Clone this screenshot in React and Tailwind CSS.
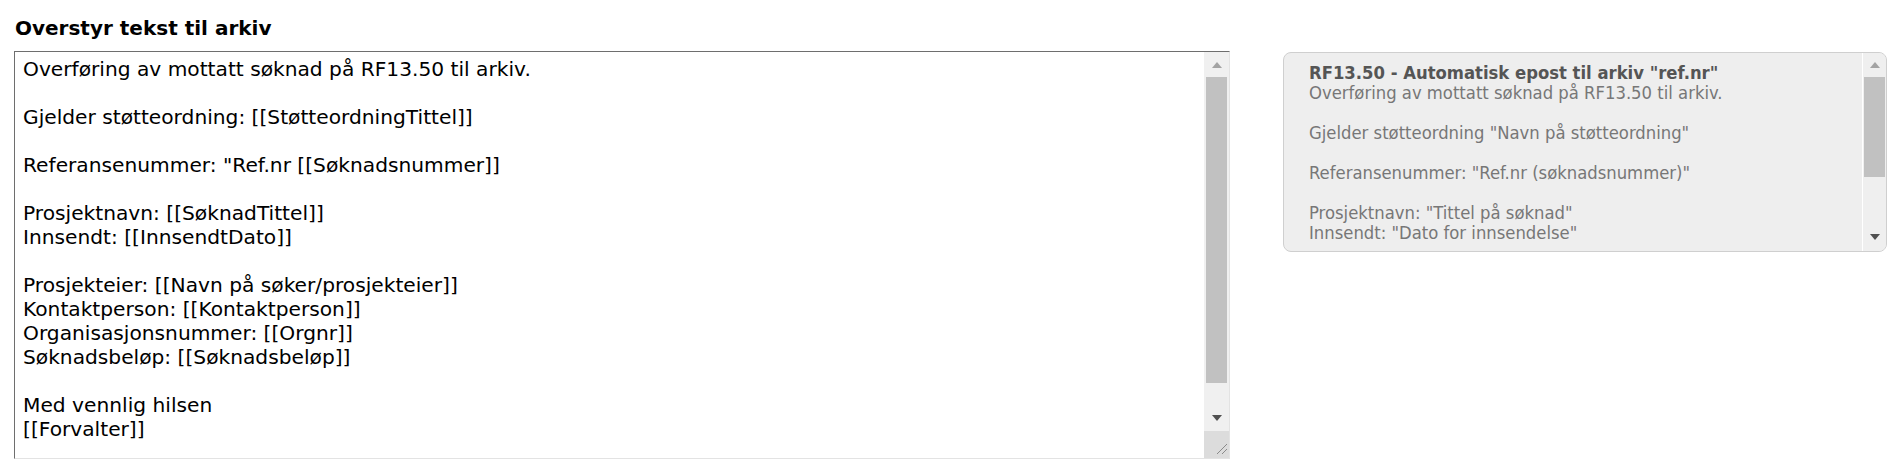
import React from 'react';

const bodyLines = [
  'Overføring av mottatt søknad på RF13.50 til arkiv.',
  '',
  'Gjelder støtteordning: [[StøtteordningTittel]]',
  '',
  'Referansenummer: "Ref.nr [[Søknadsnummer]]',
  '',
  'Prosjektnavn: [[SøknadTittel]]',
  'Innsendt: [[InnsendtDato]]',
  '',
  'Prosjekteier: [[Navn på søker/prosjekteier]]',
  'Kontaktperson: [[Kontaktperson]]',
  'Organisasjonsnummer: [[Orgnr]]',
  'Søknadsbeløp: [[Søknadsbeløp]]',
  '',
  'Med vennlig hilsen',
  '[[Forvalter]]',
];

const previewLines = [
  'Overføring av mottatt søknad på RF13.50 til arkiv.',
  '',
  'Gjelder støtteordning "Navn på støtteordning"',
  '',
  'Referansenummer: "Ref.nr (søknadsnummer)"',
  '',
  'Prosjektnavn: "Tittel på søknad"',
  'Innsendt: "Dato for innsendelse"',
];

const ArrowUp = ({ color }) => (
  <svg width="10" height="6" viewBox="0 0 10 6">
    <polygon points="0,6 10,6 5,0" fill={color} />
  </svg>
);

const ArrowDown = ({ color }) => (
  <svg width="10" height="6" viewBox="0 0 10 6">
    <polygon points="0,0 10,0 5,6" fill={color} />
  </svg>
);

const Grip = () => (
  <svg width="25" height="25" viewBox="0 0 25 25">
    <line x1="23" y1="13" x2="13" y2="23" stroke="#8a8a8a" strokeWidth="1" />
    <line x1="23" y1="18" x2="18" y2="23" stroke="#8a8a8a" strokeWidth="1" />
  </svg>
);

export default function App() {
  return (
    <div className="min-h-[469px] bg-white pl-[14px] pt-[16px]">
      <h2 className="text-[20px] leading-[24px] font-bold text-black font-['DejaVu_Sans',sans-serif] pl-[1px]">
        Overstyr tekst til arkiv
      </h2>

      <div className="mt-[11px] flex items-start">
        {/* editable text */}
        <div className="flex h-[408px] w-[1216px] border border-t-[#6e6e6e] border-l-[#6e6e6e] border-r-[#e3e3e3] border-b-[#e3e3e3] bg-white">
          <div className="flex-1 overflow-hidden pl-[8px] pt-[5px] font-['DejaVu_Sans',sans-serif] text-[20.2px] leading-[24px] text-black">
            {bodyLines.map((line, i) => (
              <div key={i} className="h-[24px] whitespace-pre">
                {line || '\u00a0'}
              </div>
            ))}
          </div>
          <div className="flex w-[25px] flex-col bg-[#f0f0f0]">
            <div className="flex h-[25px] items-center justify-center">
              <ArrowUp color="#a3a3a3" />
            </div>
            <div className="mx-[2px] h-[306px] bg-[#c1c1c1]" />
            <div className="flex h-[48px] items-end justify-center pb-[10px]">
              <ArrowDown color="#505050" />
            </div>
            <div className="flex-1 bg-[#dcdcdc]">
              <Grip />
            </div>
          </div>
        </div>

        {/* preview */}
        <div className="ml-[53px] mt-[1px] flex h-[200px] w-[604px] overflow-hidden rounded-[8px] border border-[#cfcfcf] bg-[#eeeeee]">
          <div className="flex-1 overflow-hidden pl-[25px] pt-[10px] font-['DejaVu_Sans_Condensed','DejaVu_Sans',sans-serif] text-[18.3px] leading-[20px] text-[#777777]">
            <div className="font-bold text-[#555555]">
              RF13.50 - Automatisk epost til arkiv "ref.nr"
            </div>
            {previewLines.map((line, i) => (
              <div key={i} className="h-[20px] whitespace-pre">
                {line || '\u00a0'}
              </div>
            ))}
          </div>
          <div className="flex w-[24px] flex-col border-l border-l-white bg-[#efefef]">
            <div className="flex h-[24px] items-center justify-center">
              <ArrowUp color="#a3a3a3" />
            </div>
            <div className="mx-[1px] h-[100px] bg-[#c1c1c1]" />
            <div className="flex flex-1 items-end justify-center pb-[11px]">
              <ArrowDown color="#505050" />
            </div>
          </div>
        </div>
      </div>
    </div>
  );
}
